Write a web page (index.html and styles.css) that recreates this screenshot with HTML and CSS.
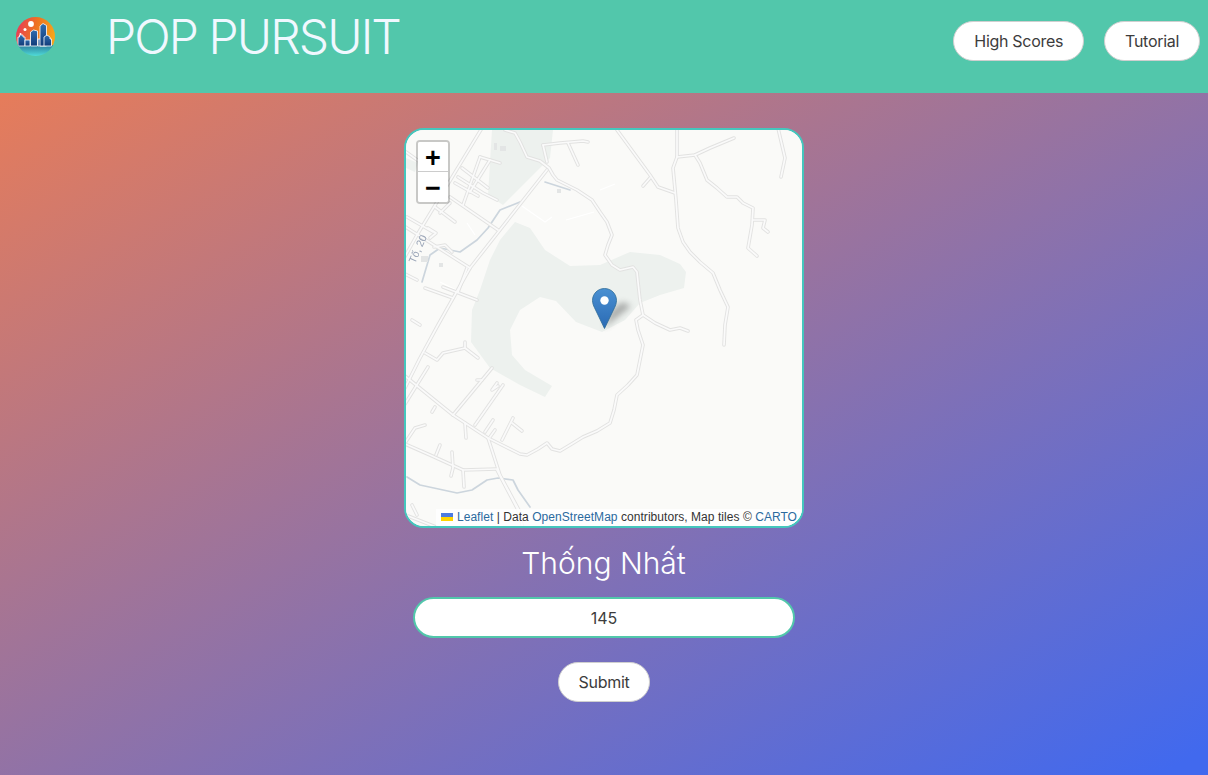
FILE: index.html
```html
<!DOCTYPE html>
<html lang="en">
<head>
<meta charset="utf-8">
<title>Pop Pursuit</title>
<link rel="stylesheet" href="styles.css">
</head>
<body>
<header class="topbar">
  <div class="brand">
    <svg class="logo" viewBox="0 0 39 39" aria-hidden="true">
      <defs>
        <linearGradient id="sky" x1="0" y1="0.3" x2="1" y2="0.5"><stop offset="0" stop-color="#e8395c"/><stop offset="0.5" stop-color="#ee7320"/><stop offset="1" stop-color="#f6a51c"/></linearGradient>
        <linearGradient id="sea" x1="0" y1="0" x2="0" y2="1"><stop offset="0" stop-color="#2b7d9e"/><stop offset="1" stop-color="#50dcd8"/></linearGradient>
        <linearGradient id="tower" x1="0" y1="0" x2="0" y2="1"><stop offset="0" stop-color="#2f6db0"/><stop offset="1" stop-color="#123a78"/></linearGradient>
        <clipPath id="disc"><circle cx="19.500" cy="19.500" r="19.500"/></clipPath>
      </defs>
      <g clip-path="url(#disc)">
        <rect width="39" height="29" fill="url(#sky)"/>
        <rect y="28" width="39" height="11" fill="url(#sea)"/>
        <circle cx="15" cy="7" r="2.900" fill="#fff"/>
        <circle cx="9" cy="12.500" r="1.500" fill="#fff"/>
        <circle cx="4.500" cy="17" r="1" fill="#fff"/>
        <g fill="url(#tower)" stroke="#fff" stroke-width="0.8">
          <path d="M2 29V20h1.500v-2H7v2h2v9z"/>
          <path d="M9 29v-6h5v6z"/>
          <path d="M14.500 29V15l3-2 4 1v15z"/>
          <path d="M22 29v-7h6v7z"/>
          <path d="M24 29V9l3-2.500 3.500 2V29z"/>
          <path d="M28 29V20l3-2 3 2v2h1.500v7z"/>
        </g>
      </g>
    </svg>
    <h1 class="title">POP PURSUIT</h1>
  </div>
  <nav class="actions">
    <button class="pill" type="button">High Scores</button>
    <button class="pill" type="button">Tutorial</button>
  </nav>
</header>
<main class="game">
  <div class="map">
    <svg class="tiles" viewBox="406 130 396 396" aria-hidden="true">
      <defs>
        <g id="roads">
          <polyline points="482,128 417,235 402,262"/>
          <polyline points="547,170 470,268 438,325 420,358 405,388"/>
          <polyline points="404,226 470,268"/>
          <polyline points="407,217 433,232"/>
          <polyline points="450,197 498,230"/>
          <polyline points="480,157 463,205"/>
          <polyline points="480,157 500,163"/>
          <polyline points="490,160 470,192"/>
          <polyline points="462,168 488,188"/>
          <polyline points="458,177 483,193 497,200"/>
          <polyline points="455,183 478,196"/>
          <polyline points="435,207 455,222"/>
          <polyline points="450,203 440,213"/>
          <polyline points="425,288 453,298"/>
          <polyline points="443,287 477,300"/>
          <polyline points="458,292 467,268"/>
          <polyline points="405,274 417,280"/>
          <polyline points="412,320 420,325"/>
          <polyline points="428,228 436,233 430,238"/>
          <polyline points="434,247 445,245 452,252"/>
          <polyline points="505,130 515,133 520,142 527,157 540,161 549,168 553,175 557,180 567,185 577,190 592,200 600,212 607,222 612,235 608,245 605,255 612,265 620,270 633,267 637,272 638,282 640,300 643,315 655,323 670,330 680,328 688,331"/>
          <polyline points="643,315 636,320 638,330 643,345 640,360 637,375 628,385 617,395 614,410 610,423 597,431 583,437 570,445 560,451 552,449 547,443 538,449 527,455 520,454 488,438 453,415 405,376"/>
          <polyline points="543,145 560,143 583,141 588,142"/>
          <polyline points="543,145 547,162"/>
          <polyline points="568,143 578,165"/>
          <polyline points="617,130 650,175 658,187 675,193"/>
          <polyline points="650,178 643,186"/>
          <polyline points="677,128 677,157 673,168 676,200 678,228 683,242 690,252 700,262 713,273 720,290 728,307 725,325 724,345"/>
          <polyline points="677,157 695,155 710,148 734,138"/>
          <polyline points="695,155 700,163 707,180 717,188 727,197 737,197 743,203 753,208 752,225 748,248 757,256"/>
          <polyline points="753,220 765,220 763,228 768,232"/>
          <polyline points="778,128 785,158 781,177"/>
          <polyline points="425,353 437,360 443,353 465,348 478,358"/>
          <polyline points="465,348 465,342"/>
          <polyline points="428,367 405,404"/>
          <polyline points="492,368 453,415"/>
          <polyline points="477,380 482,380"/>
          <polyline points="503,385 475,425"/>
          <polyline points="497,383 492,390 498,386"/>
          <polyline points="493,420 485,432"/>
          <polyline points="495,430 490,437"/>
          <polyline points="513,418 502,440"/>
          <polyline points="512,423 522,431"/>
          <polyline points="465,423 466,438"/>
          <polyline points="435,407 432,412"/>
          <polyline points="405,444 430,455 463,470 497,469"/>
          <polyline points="488,438 500,475 520,512"/>
          <polyline points="497,470 518,510 523,528"/>
          <polyline points="425,425 415,428 405,443"/>
          <polyline points="440,445 436,455"/>
          <polyline points="452,452 453,468 451,476"/>
          <polyline points="463,470 464,487"/>
          <polyline points="408,516 436,527"/>
          <polyline points="412,505 417,515"/>
          <polyline points="406,152 420,162"/>
        </g>
      </defs>
      <rect x="406" y="130" width="396" height="396" class="land"/>
      <polygon class="park" points="492,130 553,130 550,158 503,205 488,195"/>
      <polygon class="park" points="515,222 530,228 545,250 570,266 600,265 630,252 660,255 680,264 686,272 684,288 660,295 640,303 625,320 602,332 576,322 556,301 540,297 520,310 510,330 512,355 525,370 552,386 545,397 520,385 490,368 471,342 472,310 480,290 490,260 500,240"/>
      <polygon class="park" points="406,158 418,163 415,172 406,168"/>
      <g class="tracks">
        <polyline points="522,206 545,222 552,217"/>
        <polyline points="566,220 594,212"/>
        <polyline points="600,190 615,184"/>
        <polyline points="440,282 456,290"/>
        <polyline points="467,223 475,235"/>
      </g>
      <g class="water">
        <polyline points="407,477 420,485 457,493 472,490 487,480 498,478 513,480 518,490 530,507"/>
        <polyline points="520,202 500,210 488,228 477,240 460,252 440,248 430,255 422,282"/>
        <polyline points="545,182 570,190"/>
      </g>
      <use href="#roads" class="road-edge"/>
      <use href="#roads" class="road-fill"/>
      <g class="blocks">
        <rect x="500" y="146" width="6" height="5"/>
        <rect x="557" y="189" width="4" height="4"/>
        <rect x="421" y="256" width="7" height="6"/>
        <rect x="439" y="263" width="4" height="4"/>
        <rect x="494" y="143" width="3" height="7"/>
      </g>
      <text class="road-label" x="0" y="0" transform="translate(415 264) rotate(-66)">Tố, 20</text>
      <polygon class="pin-shadow" points="604,328 631,306 622,302 610,312"/>
    </svg>
    <div class="zoom">
      <button class="zoom-btn" type="button">+</button>
      <button class="zoom-btn" type="button">−</button>
    </div>
    <svg class="pin" viewBox="0 0 25 41" aria-hidden="true">
      <defs>
        <linearGradient id="pinfill" x1="0" y1="0" x2="0" y2="1"><stop offset="0" stop-color="#4a90d2"/><stop offset="1" stop-color="#2a6ab4"/></linearGradient>
      </defs>
      <path d="M12.500 0.500C5.800 0.500 0.500 5.800 0.500 12.500c0 2.500 0.900 5 2 7.200L12.500 40.500l10-20.800c1.100-2.200 2-4.700 2-7.200C24.500 5.800 19.200 0.500 12.500 0.500z" fill="url(#pinfill)" stroke="#2e6c97" stroke-width="0.8"/>
      <circle cx="12.500" cy="12.500" r="4.200" fill="#fff"/>
    </svg>
    <div class="attribution">
      <svg class="flag" viewBox="0 0 12 8" aria-hidden="true"><rect width="12" height="4" fill="#4c7be1"/><rect y="4" width="12" height="4" fill="#ffd500"/></svg>
      <a class="link">Leaflet</a> | Data <a class="link">OpenStreetMap</a> contributors, Map tiles © <a class="link">CARTO</a>
    </div>
  </div>
  <h2 class="city">Thống Nhất</h2>
  <input class="guess" type="text" value="145">
  <button class="pill submit" type="button">Submit</button>
</main>
</body>
</html>
```

FILE: styles.css
```css
* { box-sizing: border-box; }
html, body { height: 100%; }
body {
  margin: 0;
  min-height: 775px;
  display: flex;
  flex-direction: column;
  font-family: Inter, "Liberation Sans", sans-serif;
  overflow: hidden;
}
.topbar {
  height: 93px;
  flex: none;
  background: #52c7ab;
  display: flex;
  justify-content: space-between;
  align-items: flex-start;
  padding: 0 8px 0 16px;
}
.brand { display: flex; align-items: flex-start; }
.logo { width: 39px; height: 39px; margin-top: 17px; flex: none; }
.title {
  margin: 8px 0 0 51px;
  font-size: 48px;
  line-height: 58px;
  font-weight: 300;
  letter-spacing: -1.9px;
  color: #f0f8ff;
  white-space: nowrap;
}
.actions { display: flex; gap: 20px; padding-top: 21px; }
.pill {
  height: 40px;
  padding: 0 20px;
  border: 1px solid #cfcfcf;
  border-radius: 20px;
  background: #fff;
  color: #3c3c3c;
  font-family: inherit;
  font-size: 16px;
  letter-spacing: -0.3px;
}
.game {
  flex: 1;
  display: flex;
  flex-direction: column;
  align-items: center;
  padding-top: 35px;
  background: linear-gradient(to bottom right, #e67c5a 0%, #4169ee 98%);
}
.map {
  position: relative;
  width: 400px;
  height: 400px;
  flex: none;
  border: 2px solid #45c6bd;
  border-radius: 20px;
  overflow: hidden;
  background: #fafaf8;
}
.tiles { display: block; width: 396px; height: 396px; filter: blur(0.35px); }
.land { fill: #fafaf8; }
.park { fill: #edf1ee; }
.tracks polyline { fill: none; stroke: #ffffff; stroke-width: 1.2; }
.water polyline { fill: none; stroke: #ccd5dd; stroke-width: 1.7; stroke-linecap: round; stroke-linejoin: round; }
.road-edge { fill: none; stroke: #e2e2e1; stroke-width: 3.6; stroke-linecap: round; stroke-linejoin: round; }
.road-fill { fill: none; stroke: #fafafa; stroke-width: 1.7; stroke-linecap: round; stroke-linejoin: round; }
.blocks rect { fill: #e3e5e5; }
.road-label { font-family: "Liberation Sans", sans-serif; font-size: 10.500px; fill: #98a3b6; }
.pin-shadow { fill: #555; opacity: 0.45; filter: blur(3px); }
.zoom {
  position: absolute;
  left: 10px;
  top: 10px;
  width: 34px;
  display: flex;
  flex-direction: column;
  border: 2px solid rgba(0, 0, 0, 0.2);
  border-radius: 4px;
  background-clip: padding-box;
}
.zoom-btn {
  width: 30px;
  height: 30px;
  padding: 3px 0 0;
  border: 0;
  border-bottom: 1px solid #ccc;
  background: #fff;
  color: #000;
  font-family: "Liberation Sans", sans-serif;
  font-size: 27px;
  font-weight: 700;
  line-height: 27px;
}
.zoom-btn:first-child { border-radius: 2px 2px 0 0; }
.zoom-btn:last-child { border-bottom: 0; border-radius: 0 0 2px 2px; }
.pin {
  position: absolute;
  left: 186px;
  top: 158px;
  width: 25px;
  height: 41px;
}
.attribution {
  position: absolute;
  right: 0;
  bottom: 0;
  padding: 0 5px;
  background: rgba(255, 255, 255, 0.8);
  color: #333;
  font-family: "Liberation Sans", sans-serif;
  font-size: 12px;
  letter-spacing: 0.05px;
  line-height: 17px;
  white-space: nowrap;
}
.flag { width: 12px; height: 8px; margin-right: 1px; }
.link { color: #2b6a9e; }
.city {
  margin: 16px 0 0;
  font-size: 30px;
  line-height: 38px;
  font-weight: 300;
  color: #fff;
  transform: translateX(-0.5px);
}
.guess {
  width: 382px;
  height: 41px;
  margin-top: 15px;
  border: 2px solid #52c7ab;
  border-radius: 21px;
  background: #fff;
  color: #3c3c3c;
  font-family: inherit;
  font-size: 16px;
  text-align: center;
  outline: none;
}
.submit { margin-top: 24px; }
```
